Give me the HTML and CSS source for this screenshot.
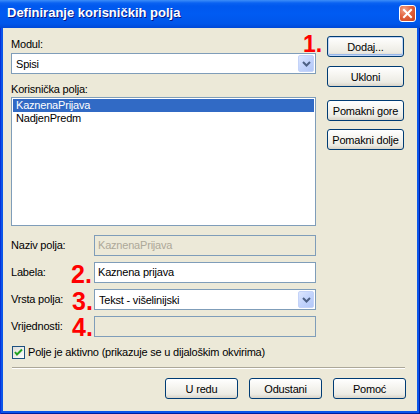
FILE: index.html
```html
<!DOCTYPE html>
<html>
<head>
<meta charset="utf-8">
<link rel="stylesheet" href="styles.css">
</head>
<body>
<div class="window">
  <div class="titlebar">
    <span class="title">Definiranje korisničkih polja</span>
    <span class="close"><svg width="15" height="15" viewBox="0 0 15 15"><path d="M4 4 L11 11 M11 4 L4 11" stroke="#fff" stroke-width="2" stroke-linecap="square"/></svg></span>
  </div>
  <div class="frame">
    <div class="client">
      <div class="top">
        <div class="leftcol">
          <div class="lbl">Modul:</div>
          <div class="combo"><span class="val">Spisi</span><span class="ddbtn"><svg width="9" height="6" viewBox="0 0 9 6"><path d="M1 1 L4.5 4.5 L8 1" fill="none" stroke="#4D6185" stroke-width="2"/></svg></span></div>
          <div class="lbl lbl2">Korisnička polja:</div>
          <div class="listbox">
            <div class="item sel">KaznenaPrijava</div>
            <div class="item">NadjenPredm</div>
          </div>
        </div>
        <div class="rightcol">
          <button class="btn side default">Dodaj...</button>
          <button class="btn side b2">Ukloni</button>
          <button class="btn side b3">Pomakni gore</button>
          <button class="btn side b4">Pomakni dolje</button>
        </div>
      </div>
      <div class="form">
        <div class="flbl">Naziv polja:</div>
        <div class="field disabled">KaznenaPrijava</div>
        <div class="flbl">Labela:</div>
        <div class="field">Kaznena prijava</div>
        <div class="flbl">Vrsta polja:</div>
        <div class="combo"><span class="val">Tekst - višelinijski</span><span class="ddbtn"><svg width="9" height="6" viewBox="0 0 9 6"><path d="M1 1 L4.5 4.5 L8 1" fill="none" stroke="#4D6185" stroke-width="2"/></svg></span></div>
        <div class="flbl">Vrijednosti:</div>
        <div class="field disabled"></div>
      </div>
      <div class="check">
        <svg class="cbox" width="13" height="13" viewBox="0 0 13 13">
          <defs><linearGradient id="cg" x1="0" y1="0" x2="1" y2="1"><stop offset="0" stop-color="#DCDCD7"/><stop offset="1" stop-color="#FFFFFF"/></linearGradient></defs>
          <rect x="0.5" y="0.5" width="12" height="12" fill="url(#cg)" stroke="#1C5180"/>
          <path d="M3 6 L5 8.5 L10 3.5" fill="none" stroke="#21A121" stroke-width="2"/>
        </svg>
        <span class="ctext">Polje je aktivno (prikazuje se u dijaloškim okvirima)</span>
      </div>
      <div class="sep"></div>
      <div class="footer">
        <button class="btn foot">U redu</button>
        <button class="btn foot">Odustani</button>
        <button class="btn foot">Pomoć</button>
      </div>
      <span class="num n1">1.</span>
      <span class="num n2">2.</span>
      <span class="num n3">3.</span>
      <span class="num n4">4.</span>
    </div>
  </div>
</div>
</body>
</html>
```
FILE: styles.css
```css
html, body {
  margin: 0;
  padding: 0;
  width: 420px;
  height: 414px;
  overflow: hidden;
  background: #0842D8;
}
body {
  font-family: "Liberation Sans", Arial, sans-serif;
  font-size: 11px;
  letter-spacing: -0.2px;
  color: #000;
}
.window {
  width: 420px;
  height: 414px;
  display: flex;
  flex-direction: column;
}
.titlebar {
  height: 28px;
  flex: none;
  box-sizing: border-box;
  padding: 5px 4px 0 7px;
  display: flex;
  align-items: flex-start;
  justify-content: space-between;
  background: linear-gradient(to bottom, #3D8EF8 0px, #0A62F2 3px, #0058EE 6px, #005BF2 50%, #0056EA 85%, #0048D6 100%);
}
.title {
  color: #fff;
  font-weight: bold;
  font-size: 13px;
  line-height: 16px;
  letter-spacing: 0;
  text-shadow: 1px 1px 0 #0A1883;
}
.close {
  width: 17px;
  height: 17px;
  box-sizing: border-box;
  border: 1px solid #fff;
  border-radius: 3px;
  background: radial-gradient(circle at 30% 25%, #F3A48A 0%, #E2623E 45%, #C8421E 100%);
  display: flex;
  align-items: center;
  justify-content: center;
}
.frame {
  flex: 1;
  display: flex;
  padding: 0 3px 3px 3px;
  background: #0B55E9;
  box-shadow: inset 1px 0 #0831D9, inset -1px 0 #001EA0, inset 0 -1px #001EA0;
}
.client {
  flex: 1;
  position: relative;
  background: #ECE9D8;
  box-sizing: border-box;
  padding: 8px 13px 0 8px;
  display: flex;
  flex-direction: column;
}
.top {
  display: flex;
  gap: 11px;
}
.leftcol {
  width: 305px;
  padding-top: 2px;
}
.lbl {
  height: 13px;
  line-height: 13px;
  margin-bottom: 2px;
}
.lbl2 {
  margin-top: 9px;
  margin-bottom: 1px;
}
.combo {
  height: 21px;
  box-sizing: border-box;
  border: 1px solid #7F9DB9;
  background: #fff;
  display: flex;
  align-items: center;
  justify-content: space-between;
  padding: 1px;
}
.combo .val {
  padding-left: 3px;
}
.ddbtn {
  width: 16px;
  height: 17px;
  box-sizing: border-box;
  border: 1px solid #C4D3F8;
  border-radius: 2px;
  background: linear-gradient(135deg, #DCE6FE 0%, #C3D4FC 50%, #B2C7F7 100%);
  display: flex;
  align-items: center;
  justify-content: center;
}
.listbox {
  height: 129px;
  box-sizing: border-box;
  border: 1px solid #7F9DB9;
  background: #fff;
  padding: 1px;
}
.item {
  height: 13px;
  line-height: 13px;
  padding-left: 3px;
}
.item.sel {
  background: #316AC5;
  color: #fff;
}
.rightcol {
  display: flex;
  flex-direction: column;
  align-items: flex-start;
}
.btn {
  font-family: "Liberation Sans", Arial, sans-serif;
  font-size: 11px;
  letter-spacing: -0.2px;
  color: #000;
  height: 21px;
  box-sizing: border-box;
  border: 1px solid #003C74;
  border-radius: 3px;
  background: linear-gradient(to bottom, #FFFFFF 0%, #F5F4EF 45%, #ECEBE4 80%, #D9D4C8 100%);
  padding: 0;
  margin: 0;
}
.side {
  width: 77px;
}
.default {
  box-shadow: inset 0 0 0 1px #C2D6F5, inset 0 -1px 0 1px #98B8EA;
}
.b2 { margin-top: 9px; }
.b3 { margin-top: 13px; }
.b4 { margin-top: 8px; }
.form {
  margin-top: 9px;
  display: grid;
  grid-template-columns: 83px 222px;
  grid-auto-rows: 21px;
  row-gap: 6px;
  align-items: center;
}
.flbl {
  line-height: 13px;
}
.field {
  height: 21px;
  box-sizing: border-box;
  border: 1px solid #7F9DB9;
  background: #fff;
  line-height: 19px;
  padding-left: 3px;
}
.field.disabled {
  background: #ECE9D8;
  color: #ACA899;
}
.check {
  margin-top: 9px;
  height: 13px;
  display: flex;
  align-items: center;
  gap: 3px;
  padding-left: 1px;
}
.cbox {
  flex: none;
}
.ctext {
  line-height: 13px;
  margin-top: -1px;
}
.sep {
  margin: 8px -1px 0 1px;
  height: 1px;
  background: #ACA899;
  border-bottom: 1px solid #fff;
}
.footer {
  margin: 9px -2px 0 0;
  display: flex;
  justify-content: flex-end;
  gap: 11px;
}
.foot {
  width: 73px;
}
.num {
  position: absolute;
  color: #FF0000;
  font-weight: bold;
  font-size: 25px;
  line-height: 1;
  letter-spacing: 0;
}
.n1 { left: 300px; top: 5px; font-size: 23px; }
.n2 { left: 68px; top: 234px; }
.n3 { left: 69px; top: 261px; }
.n4 { left: 69px; top: 287px; }
```
